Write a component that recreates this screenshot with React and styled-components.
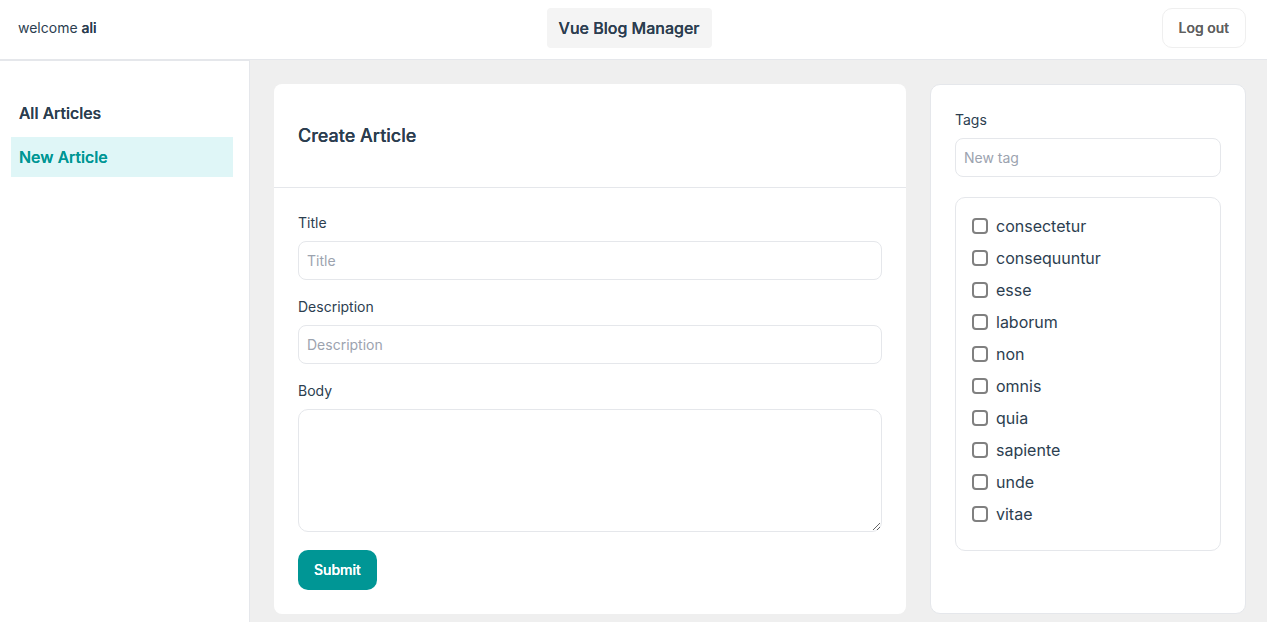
import React from "react";
import styled, { createGlobalStyle, css } from "styled-components";

const GlobalStyle = createGlobalStyle`
  *, *::before, *::after { box-sizing: border-box; }
  body {
    margin: 0;
    background: #efefef;
    color: #2c3e50;
    font-family: Inter, "Liberation Sans", sans-serif;
    font-size: 16px;
    line-height: 24px;
  }
  button, input, textarea { font: inherit; color: inherit; }
`;

const emphasis = css`
  font-weight: 500;
  text-shadow: 0 0 0 currentColor;
`;

const Page = styled.div`
  min-height: 100vh;
  display: flex;
  flex-direction: column;
`;

const Header = styled.header`
  display: flex;
  align-items: center;
  justify-content: space-between;
  height: 60px;
  padding: 0 21px 3px 18px;
  background: #fff;
  border-bottom: 1px solid #e5e7eb;
`;

const Welcome = styled.p`
  margin: 0;
  font-size: 14px;
`;

const UserName = styled.strong`
  ${emphasis}
`;

const Brand = styled.a`
  padding: 8px 12px;
  border-radius: 4px;
  background: #f4f4f4;
  color: inherit;
  text-decoration: none;
  ${emphasis}
`;

const Button = styled.button`
  height: 40px;
  padding: 0 16px;
  border: 1px solid #efefef;
  border-radius: 10px;
  background: #fff;
  color: #606060;
  font-size: 14px;
  cursor: pointer;
  ${emphasis}
`;

const PrimaryButton = styled(Button)`
  align-self: flex-start;
  margin-top: 2px;
  border: 0;
  background: #009695;
  color: #fff;
`;

const Layout = styled.div`
  flex: 1;
  display: flex;
`;

const Sidebar = styled.nav`
  flex: 0 0 250px;
  display: flex;
  flex-direction: column;
  gap: 4px;
  padding: 32px 16px 32px 11px;
  background: #fff;
  border-top: 1px solid #e5e7eb;
  border-right: 1px solid #e5e7eb;
`;

const NavLink = styled.a`
  padding: 8px;
  background: ${(p) => (p.$active ? "#dff6f7" : "transparent")};
  color: ${(p) => (p.$active ? "#009695" : "inherit")};
  text-decoration: none;
  ${emphasis}
`;

const Main = styled.main`
  flex: 1;
  display: grid;
  grid-template-columns: 2fr 1fr;
  align-items: start;
  gap: 24px;
  padding: 24px 21px 8px 24px;
`;

const Card = styled.section`
  min-height: 530px;
  border-radius: 8px;
  background: #fff;
`;

const CardHeader = styled.header`
  padding: 40px 24px 39px;
  border-bottom: 1px solid #e5e7eb;
`;

const CardTitle = styled.h1`
  margin: 0;
  font-size: 18px;
  line-height: 24px;
  ${emphasis}
`;

const Form = styled.form`
  display: flex;
  flex-direction: column;
  gap: 16px;
  padding: 24px;
`;

const Field = styled.div`
  display: flex;
  flex-direction: column;
  gap: 8px;
`;

const Label = styled.label`
  font-size: 14px;
  line-height: 21px;
`;

const Input = styled.input`
  width: 100%;
  height: 39px;
  padding: 0 8px;
  border: 1px solid #e5e7eb;
  border-radius: 8px;
  background: #fff;
  font-size: 14px;
  &::placeholder { color: #9ca3af; opacity: 1; }
`;

const TextArea = styled.textarea`
  display: block;
  width: 100%;
  height: 123px;
  padding: 8px;
  border: 1px solid #e5e7eb;
  border-radius: 10px;
  background: #fff;
  font-size: 14px;
  resize: vertical;
`;

const TagsCard = styled.aside`
  display: flex;
  flex-direction: column;
  gap: 20px;
  min-height: 530px;
  padding: 24px;
  border: 1px solid #e5e7eb;
  border-radius: 10px;
  background: #fff;
`;

const TagList = styled.ul`
  margin: 0;
  padding: 16px 16px 24px;
  display: flex;
  flex-direction: column;
  gap: 8px;
  border: 1px solid #e5e7eb;
  border-radius: 10px;
  list-style: none;
`;

const TagLabel = styled.label`
  display: flex;
  align-items: center;
  gap: 8px;
`;

const Checkbox = styled.input`
  appearance: none;
  width: 16px;
  height: 16px;
  margin: 0;
  border: 2px solid #808080;
  border-radius: 4px;
  background: #fff;
  &:checked {
    border-color: #009695;
    background: #009695;
  }
`;

const tags = [
  "consectetur",
  "consequuntur",
  "esse",
  "laborum",
  "non",
  "omnis",
  "quia",
  "sapiente",
  "unde",
  "vitae",
];

export default function App() {
  return (
    <Page>
      <GlobalStyle />
      <Header>
        <Welcome>
          welcome <UserName>ali</UserName>
        </Welcome>
        <Brand href="#">Vue Blog Manager</Brand>
        <Button type="button">Log out</Button>
      </Header>
      <Layout>
        <Sidebar>
          <NavLink href="#articles">All Articles</NavLink>
          <NavLink href="#new" $active aria-current="page">
            New Article
          </NavLink>
        </Sidebar>
        <Main>
          <Card>
            <CardHeader>
              <CardTitle>Create Article</CardTitle>
            </CardHeader>
            <Form onSubmit={(e) => e.preventDefault()}>
              <Field>
                <Label htmlFor="title">Title</Label>
                <Input id="title" placeholder="Title" />
              </Field>
              <Field>
                <Label htmlFor="description">Description</Label>
                <Input id="description" placeholder="Description" />
              </Field>
              <Field>
                <Label htmlFor="body">Body</Label>
                <TextArea id="body" />
              </Field>
              <PrimaryButton type="submit">Submit</PrimaryButton>
            </Form>
          </Card>
          <TagsCard>
            <Field>
              <Label htmlFor="tag">Tags</Label>
              <Input id="tag" placeholder="New tag" />
            </Field>
            <TagList>
              {tags.map((tag) => (
                <li key={tag}>
                  <TagLabel>
                    <Checkbox type="checkbox" />
                    {tag}
                  </TagLabel>
                </li>
              ))}
            </TagList>
          </TagsCard>
        </Main>
      </Layout>
    </Page>
  );
}
